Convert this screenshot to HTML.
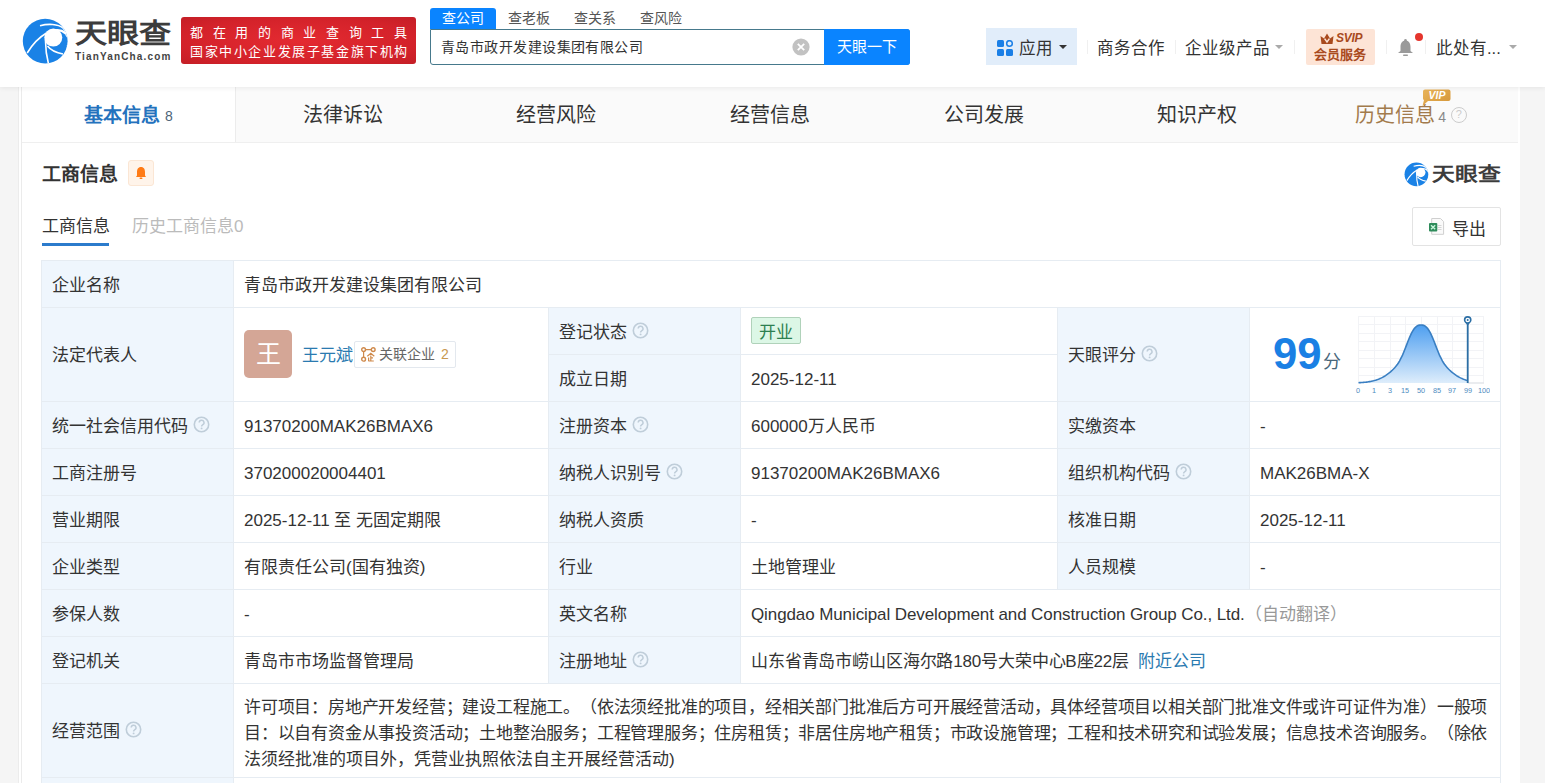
<!DOCTYPE html>
<html lang="zh-CN"><head><meta charset="utf-8">
<style>
*{box-sizing:border-box;margin:0;padding:0}
html,body{width:1545px;height:783px;overflow:hidden}
body{text-spacing-trim:space-all;background:#f5f5f5;font-family:"Liberation Sans",sans-serif;color:#333;position:relative}
.a{position:absolute;white-space:nowrap}
#hdr{position:absolute;left:0;top:0;width:1545px;height:87px;background:#fff;box-shadow:0 1px 5px rgba(0,0,0,.07);z-index:2}
#card{position:absolute;left:18px;top:87px;width:1502px;height:720px;background:#fff;border-left:1px solid #ececec}
#card:before{content:"";position:absolute;left:2px;top:0;width:1px;height:720px;background:#ebebeb}
#tabs{position:absolute;left:3px;top:0;width:1496px;height:56px;background:#fafafa;border-bottom:1px solid #efefef}
.tab{position:absolute;top:0;height:55px;width:213.7px;text-align:center;font-size:20px;line-height:57px;color:#333}
.tab.on{border-right:1px solid #ececec;background:#fff;color:#2472bd;font-weight:bold;font-size:19px}
#tbl{position:absolute;left:41px;top:260px;width:1460px;border-top:1px solid #e4ebf2;border-left:1px solid #e4ebf2}
.c{position:absolute;font-size:17px;line-height:46px;padding-left:10px;border-right:1px solid #e4ebf2;border-bottom:1px solid #e4ebf2;white-space:nowrap;color:#333}
.l{background:#eff6fd}
.qs{display:inline-block;vertical-align:middle;margin-left:5px;position:relative;top:-3px}
.q{display:inline-block;width:16px;height:16px;border:1.8px solid #bdd0e2;border-radius:50%;font-size:11px;line-height:13px;text-align:center;color:#b5cadf;vertical-align:middle;margin-left:7px;position:relative;top:-2px;font-weight:bold}
</style></head><body>
<div id="hdr">
  <!-- logo -->
  <svg class="a" style="left:18px;top:14px" width="54" height="54" viewBox="18 14 54 54">
    <defs><clipPath id="lc"><circle cx="45.2" cy="41.1" r="22.4"/></clipPath></defs>
    <circle cx="45.2" cy="41.1" r="22.4" fill="#1a82e6"/>
    <g clip-path="url(#lc)">
    <ellipse cx="57.5" cy="39" rx="12" ry="10" fill="#fff"/>
    <circle cx="57.5" cy="41.5" r="10.3" fill="#1a82e6"/>
    <circle cx="53.3" cy="37.6" r="9" fill="#fff"/>
    <path d="M40 25.8 C 48 23.5, 58 23.8, 63 28 C 65 30, 66 32, 66.5 34" stroke="#fff" stroke-width="1.6" fill="none"/>
    <path d="M27.2 53 C 32 45, 38 38, 46.5 33" stroke="#fff" stroke-width="1.6" fill="none"/>
    <path d="M45.6 39 C 45.3 47, 46.5 56, 48.5 64" stroke="#fff" stroke-width="1.6" fill="none"/>
    <path d="M47.5 46 C 51 50.5, 57 53, 63 54" stroke="#fff" stroke-width="1.6" fill="none"/>
    </g>
  </svg>
  <div class="a" style="left:75px;top:14px;font-size:27px;line-height:40px;font-weight:900;color:#3c3c3c;transform:scaleX(1.19);transform-origin:0 0">天眼查</div>
  <div class="a" style="left:75px;top:51px;font-size:10px;line-height:12px;font-weight:bold;color:#444;letter-spacing:1.15px">TianYanCha.com</div>
  <div class="a" style="left:181px;top:17px;width:235px;height:47px;background:radial-gradient(ellipse at 50% 50%,#e42a31,#d3222a 70%,#c41e26);border-radius:3px"></div>
  <div class="a" style="left:190px;top:23px;width:217px;font-size:13px;line-height:20px;font-weight:500;color:#fff;text-align:justify;text-align-last:justify;letter-spacing:0">都在用的商业查询工具</div>
  <div class="a" style="left:190px;top:42px;width:220px;font-size:13px;line-height:20px;color:#fff;letter-spacing:1.6px">国家中小企业发展子基金旗下机构</div>
  <!-- search -->
  <div class="a" style="left:430px;top:8px;width:66px;height:21px;background:#0a84ff;border-radius:3px 3px 0 0;color:#fff;font-size:14px;line-height:20px;text-align:center">查公司</div>
  <div class="a" style="left:496px;top:8px;width:66px;line-height:20px;font-size:14px;color:#555;text-align:center">查老板</div>
  <div class="a" style="left:562px;top:8px;width:66px;line-height:20px;font-size:14px;color:#555;text-align:center">查关系</div>
  <div class="a" style="left:628px;top:8px;width:66px;line-height:20px;font-size:14px;color:#555;text-align:center">查风险</div>
  <div class="a" style="left:430px;top:29px;width:480px;height:36px;border:1px solid #46798c;border-radius:0 3px 3px 3px;background:#fff"></div>
  <div class="a" style="left:441px;top:37px;font-size:14px;letter-spacing:0.45px;line-height:20px;color:#333">青岛市政开发建设集团有限公司</div>
  <svg class="a" style="left:792px;top:38px" width="18" height="18" viewBox="0 0 18 18"><circle cx="9" cy="9" r="8.6" fill="#c2c2c2"/><path d="M5.8 5.8 L12.2 12.2 M12.2 5.8 L5.8 12.2" stroke="#fff" stroke-width="1.8"/></svg>
  <div class="a" style="left:824px;top:29px;width:86px;height:36px;background:#0a84ff;border-radius:0 3px 3px 0;color:#fff;font-size:15px;line-height:36px;text-align:center">天眼一下</div>
  <!-- right nav -->
  <div class="a" style="left:986px;top:28px;width:91px;height:37px;background:#e1edfa"></div>
  <svg class="a" style="left:997px;top:40px" width="16" height="16" viewBox="0 0 16 16">
    <rect x="0" y="0" width="7" height="7" rx="1.5" fill="#1a7fe6"/>
    <circle cx="12.5" cy="3.5" r="2.8" fill="none" stroke="#1a7fe6" stroke-width="1.5"/>
    <rect x="0" y="9" width="7" height="7" rx="1.5" fill="#1a7fe6"/>
    <rect x="9" y="9" width="7" height="7" rx="1.5" fill="#1a7fe6"/>
  </svg>
  <div class="a" style="left:1019px;top:37px;font-size:16.5px;line-height:22px;color:#333">应用</div>
  <div class="a" style="left:1059px;top:45px;width:0;height:0;border-left:4px solid transparent;border-right:4px solid transparent;border-top:4px solid #333"></div>
  <div class="a" style="left:1087px;top:40px;width:1px;height:14px;background:#f0f0f0"></div>
  <div class="a" style="left:1097px;top:37px;font-size:16.5px;line-height:22px;color:#333">商务合作</div>
  <div class="a" style="left:1175px;top:40px;width:1px;height:14px;background:#f0f0f0"></div>
  <div class="a" style="left:1185px;top:37px;font-size:16.5px;line-height:22px;color:#333">企业级产品</div>
  <div class="a" style="left:1275px;top:45px;width:0;height:0;border-left:4px solid transparent;border-right:4px solid transparent;border-top:4px solid #aaa"></div>
  <div class="a" style="left:1294px;top:40px;width:1px;height:14px;background:#f0f0f0"></div>
  <div class="a" style="left:1306px;top:29px;width:69px;height:36px;background:#fde4d6;border-radius:2px"></div>
  <svg class="a" style="left:1320px;top:33px" width="14" height="12" viewBox="0 0 14 12">
    <path d="M0.5 3 L4 5.5 L7 0.5 L10 5.5 L13.5 3 L12.5 11 L1.5 11 Z" fill="#a94a1e"/>
    <path d="M4.6 5.6 L7 9 L9.4 5.6" stroke="#fde4d6" stroke-width="1.5" fill="none"/>
  </svg>
  <div class="a" style="left:1336px;top:31px;font-size:12px;line-height:14px;font-weight:bold;font-style:italic;color:#a94a1e;letter-spacing:-0.3px">SVIP</div>
  <div class="a" style="left:1314px;top:47px;font-size:13px;line-height:16px;font-weight:900;color:#a94a1e">会员服务</div>
  <div class="a" style="left:1386px;top:40px;width:1px;height:14px;background:#f0f0f0"></div>
  <svg class="a" style="left:1397px;top:38px" width="17" height="19" viewBox="0 0 17 19">
    <path d="M8.5 2.5 C 5 2.5, 3.5 5.5, 3.5 9 L 3.5 13 L 1 15 L 16 15 L 13.5 13 L 13.5 9 C 13.5 5.5, 12 2.5, 8.5 2.5 Z" fill="#9a9a9a"/><circle cx="8.5" cy="2.3" r="1.3" fill="#9a9a9a"/>
    <rect x="6" y="16.5" width="5" height="1.5" rx=".7" fill="#9a9a9a"/>
  </svg>
  <div class="a" style="left:1415px;top:33px;width:8px;height:8px;border-radius:50%;background:#e5352d"></div>
  <div class="a" style="left:1425px;top:40px;width:1px;height:14px;background:#f0f0f0"></div>
  <div class="a" style="left:1436px;top:37px;font-size:16.5px;line-height:22px;color:#333">此处有...</div>
  <div class="a" style="left:1509px;top:45px;width:0;height:0;border-left:4px solid transparent;border-right:4px solid transparent;border-top:4px solid #aaa"></div>
</div>

<div id="card">
  <div id="tabs">
    <div class="tab on" style="left:0">基本信息<span style="font-size:14px;font-weight:normal;color:#4d6478;margin-left:5px;position:relative;top:-1px">8</span></div>
    <div class="tab" style="left:213.7px">法律诉讼</div>
    <div class="tab" style="left:427.4px">经营风险</div>
    <div class="tab" style="left:641.1px">经营信息</div>
    <div class="tab" style="left:854.8px">公司发展</div>
    <div class="tab" style="left:1068.5px">知识产权</div>
    <div class="tab" style="left:1282.2px;color:#a27a4c">历史信息<span style="font-size:14px;color:#888;margin-left:3px">4</span><span class="q" style="border-color:#ccc;color:#ccc;width:16px;height:16px;margin-left:5px;border-width:1.3px;font-weight:normal">?</span></div>
  </div>
</div>

<div class="a" style="left:42px;top:162px;font-size:19px;line-height:26px;font-weight:bold;color:#333">工商信息</div>
<div class="a" style="left:128px;top:160px;width:26px;height:26px;background:#fff4ea;border:1px solid #fbe6d4;border-radius:3px"></div>
<svg class="a" style="left:134px;top:166px" width="14" height="14" viewBox="0 0 14 14">
  <path d="M7 1 C 4 1, 3 3.5, 3 6 L 3 9.5 L 2 11 L 12 11 L 11 9.5 L 11 6 C 11 3.5, 10 1, 7 1 Z" fill="#ff7b16"/>
  <rect x="5.5" y="11.5" width="3" height="1.5" rx=".7" fill="#ff7b16"/>
</svg>
<svg class="a" style="left:1402px;top:160px" width="28.6" height="28.6" viewBox="18 14 54 54">
    <defs><clipPath id="lc2"><circle cx="45.2" cy="41.1" r="22.4"/></clipPath></defs>
    <circle cx="45.2" cy="41.1" r="22.4" fill="#1a82e6"/>
    <g clip-path="url(#lc2)">
    <ellipse cx="57.5" cy="39" rx="12" ry="10" fill="#fff"/>
    <circle cx="57.5" cy="41.5" r="10.3" fill="#1a82e6"/>
    <circle cx="53.3" cy="37.6" r="9" fill="#fff"/>
    <path d="M40 25.8 C 48 23.5, 58 23.8, 63 28 C 65 30, 66 32, 66.5 34" stroke="#fff" stroke-width="2.2" fill="none"/>
    <path d="M27.2 53 C 32 45, 38 38, 46.5 33" stroke="#fff" stroke-width="2.2" fill="none"/>
    <path d="M45.6 39 C 45.3 47, 46.5 56, 48.5 64" stroke="#fff" stroke-width="2.2" fill="none"/>
    <path d="M47.5 46 C 51 50.5, 57 53, 63 54" stroke="#fff" stroke-width="2.2" fill="none"/>
    </g>
  </svg>
<div class="a" style="left:1432px;top:161px;font-size:19px;line-height:28px;font-weight:900;color:#3c3c3c;transform:scaleX(1.2);transform-origin:0 0">天眼查</div>

<div class="a" style="left:42px;top:215px;font-size:17px;line-height:24px;color:#333">工商信息</div>
<div class="a" style="left:132px;top:215px;font-size:17px;line-height:24px;color:#bbb">历史工商信息0</div>
<div class="a" style="left:42px;top:243px;width:67px;height:3px;background:#2b7bcc"></div>

<div class="a" style="left:1412px;top:207px;width:89px;height:39px;border:1px solid #e3e3e3;border-radius:2px;background:#fff"></div>
<svg class="a" style="left:1428px;top:217px" width="18" height="19" viewBox="0 0 18 19">
  <path d="M3.7 1.5 H12.5 L15.6 4.6 V17.3 H3.7 Z" fill="#fafafa" stroke="#cfcfcf" stroke-width="1"/>
  <line x1="10" y1="8.5" x2="13.5" y2="8.5" stroke="#d0d0d0" stroke-width="0.9"/><line x1="10" y1="10.5" x2="13.5" y2="10.5" stroke="#d0d0d0" stroke-width="0.9"/><line x1="10" y1="12.5" x2="13.5" y2="12.5" stroke="#d0d0d0" stroke-width="0.9"/>
  <rect x="1" y="6" width="8.3" height="8.5" rx="1" fill="#2e8b5a"/>
  <path d="M3 8.2 L7.2 12.3 M7.2 8.2 L3 12.3" stroke="#c8f5dc" stroke-width="1.4"/>
</svg>
<div class="a" style="left:1452px;top:218px;font-size:17px;line-height:24px;color:#333">导出</div>

<!-- table -->
<div class="a" style="left:41px;top:260px;width:192px;height:530px;background:#eff6fd"></div>
<div class="a" style="left:548px;top:307px;width:192px;height:376px;background:#eff6fd"></div>
<div class="a" style="left:1057px;top:307px;width:192px;height:282px;background:#eff6fd"></div>
<div class="a" style="left:41px;top:260px;width:1460px;height:1px;background:#e6ecf2"></div>
<div class="a" style="left:41px;top:307px;width:1460px;height:1px;background:#e6ecf2"></div>
<div class="a" style="left:41px;top:401px;width:1460px;height:1px;background:#e6ecf2"></div>
<div class="a" style="left:41px;top:448px;width:1460px;height:1px;background:#e6ecf2"></div>
<div class="a" style="left:41px;top:495px;width:1460px;height:1px;background:#e6ecf2"></div>
<div class="a" style="left:41px;top:542px;width:1460px;height:1px;background:#e6ecf2"></div>
<div class="a" style="left:41px;top:589px;width:1460px;height:1px;background:#e6ecf2"></div>
<div class="a" style="left:41px;top:636px;width:1460px;height:1px;background:#e6ecf2"></div>
<div class="a" style="left:41px;top:683px;width:1460px;height:1px;background:#e6ecf2"></div>
<div class="a" style="left:41px;top:777px;width:1460px;height:1px;background:#e6ecf2"></div>
<div class="a" style="left:548px;top:354px;width:510px;height:1px;background:#e6ecf2"></div>
<div class="a" style="left:41px;top:260px;width:1px;height:530px;background:#e6ecf2"></div>
<div class="a" style="left:233px;top:260px;width:1px;height:530px;background:#e6ecf2"></div>
<div class="a" style="left:1500px;top:260px;width:1px;height:530px;background:#e6ecf2"></div>
<div class="a" style="left:548px;top:307px;width:1px;height:376px;background:#e6ecf2"></div>
<div class="a" style="left:740px;top:307px;width:1px;height:376px;background:#e6ecf2"></div>
<div class="a" style="left:1057px;top:307px;width:1px;height:282px;background:#e6ecf2"></div>
<div class="a" style="left:1249px;top:307px;width:1px;height:282px;background:#e6ecf2"></div>
<div class="a" style="left:52px;top:262px;font-size:17px;line-height:47px;color:#333;">企业名称</div>
<div class="a" style="left:244px;top:262px;font-size:17px;line-height:47px;color:#333;">青岛市政开发建设集团有限公司</div>
<div class="a" style="left:559px;top:309px;font-size:17px;line-height:47px;color:#333;">登记状态<svg class="qs" width="17" height="17" viewBox="0 0 17 17"><circle cx="8.5" cy="8.5" r="7.2" fill="none" stroke="#bfcdd9" stroke-width="1.6"/><path d="M6.2 6.6 A2.4 2.4 0 1 1 9.6 8.8 C 8.9 9.2 8.6 9.6 8.6 10.4" fill="none" stroke="#bfcdd9" stroke-width="1.5"/><circle cx="8.6" cy="12.4" r="0.95" fill="#bfcdd9"/></svg></div>
<div class="a" style="left:559px;top:356px;font-size:17px;line-height:47px;color:#333;">成立日期</div>
<div class="a" style="left:751px;top:356px;font-size:17px;line-height:47px;color:#333;">2025-12-11</div>
<div class="a" style="left:52px;top:403px;font-size:17px;line-height:47px;color:#333;">统一社会信用代码<svg class="qs" width="17" height="17" viewBox="0 0 17 17"><circle cx="8.5" cy="8.5" r="7.2" fill="none" stroke="#bfcdd9" stroke-width="1.6"/><path d="M6.2 6.6 A2.4 2.4 0 1 1 9.6 8.8 C 8.9 9.2 8.6 9.6 8.6 10.4" fill="none" stroke="#bfcdd9" stroke-width="1.5"/><circle cx="8.6" cy="12.4" r="0.95" fill="#bfcdd9"/></svg></div>
<div class="a" style="left:244px;top:403px;font-size:17px;line-height:47px;color:#333;">91370200MAK26BMAX6</div>
<div class="a" style="left:559px;top:403px;font-size:17px;line-height:47px;color:#333;">注册资本<svg class="qs" width="17" height="17" viewBox="0 0 17 17"><circle cx="8.5" cy="8.5" r="7.2" fill="none" stroke="#bfcdd9" stroke-width="1.6"/><path d="M6.2 6.6 A2.4 2.4 0 1 1 9.6 8.8 C 8.9 9.2 8.6 9.6 8.6 10.4" fill="none" stroke="#bfcdd9" stroke-width="1.5"/><circle cx="8.6" cy="12.4" r="0.95" fill="#bfcdd9"/></svg></div>
<div class="a" style="left:751px;top:403px;font-size:17px;line-height:47px;color:#333;">600000万人民币</div>
<div class="a" style="left:1068px;top:403px;font-size:17px;line-height:47px;color:#333;">实缴资本</div>
<div class="a" style="left:1260px;top:403px;font-size:17px;line-height:47px;color:#333;">-</div>
<div class="a" style="left:52px;top:450px;font-size:17px;line-height:47px;color:#333;">工商注册号</div>
<div class="a" style="left:244px;top:450px;font-size:17px;line-height:47px;color:#333;">370200020004401</div>
<div class="a" style="left:559px;top:450px;font-size:17px;line-height:47px;color:#333;">纳税人识别号<svg class="qs" width="17" height="17" viewBox="0 0 17 17"><circle cx="8.5" cy="8.5" r="7.2" fill="none" stroke="#bfcdd9" stroke-width="1.6"/><path d="M6.2 6.6 A2.4 2.4 0 1 1 9.6 8.8 C 8.9 9.2 8.6 9.6 8.6 10.4" fill="none" stroke="#bfcdd9" stroke-width="1.5"/><circle cx="8.6" cy="12.4" r="0.95" fill="#bfcdd9"/></svg></div>
<div class="a" style="left:751px;top:450px;font-size:17px;line-height:47px;color:#333;">91370200MAK26BMAX6</div>
<div class="a" style="left:1068px;top:450px;font-size:17px;line-height:47px;color:#333;">组织机构代码<svg class="qs" width="17" height="17" viewBox="0 0 17 17"><circle cx="8.5" cy="8.5" r="7.2" fill="none" stroke="#bfcdd9" stroke-width="1.6"/><path d="M6.2 6.6 A2.4 2.4 0 1 1 9.6 8.8 C 8.9 9.2 8.6 9.6 8.6 10.4" fill="none" stroke="#bfcdd9" stroke-width="1.5"/><circle cx="8.6" cy="12.4" r="0.95" fill="#bfcdd9"/></svg></div>
<div class="a" style="left:1260px;top:450px;font-size:17px;line-height:47px;color:#333;">MAK26BMA-X</div>
<div class="a" style="left:52px;top:497px;font-size:17px;line-height:47px;color:#333;">营业期限</div>
<div class="a" style="left:244px;top:497px;font-size:17px;line-height:47px;color:#333;">2025-12-11 至 无固定期限</div>
<div class="a" style="left:559px;top:497px;font-size:17px;line-height:47px;color:#333;">纳税人资质</div>
<div class="a" style="left:751px;top:497px;font-size:17px;line-height:47px;color:#333;">-</div>
<div class="a" style="left:1068px;top:497px;font-size:17px;line-height:47px;color:#333;">核准日期</div>
<div class="a" style="left:1260px;top:497px;font-size:17px;line-height:47px;color:#333;">2025-12-11</div>
<div class="a" style="left:52px;top:544px;font-size:17px;line-height:47px;color:#333;">企业类型</div>
<div class="a" style="left:244px;top:544px;font-size:17px;line-height:47px;color:#333;">有限责任公司(国有独资)</div>
<div class="a" style="left:559px;top:544px;font-size:17px;line-height:47px;color:#333;">行业</div>
<div class="a" style="left:751px;top:544px;font-size:17px;line-height:47px;color:#333;">土地管理业</div>
<div class="a" style="left:1068px;top:544px;font-size:17px;line-height:47px;color:#333;">人员规模</div>
<div class="a" style="left:1260px;top:544px;font-size:17px;line-height:47px;color:#333;">-</div>
<div class="a" style="left:52px;top:591px;font-size:17px;line-height:47px;color:#333;">参保人数</div>
<div class="a" style="left:244px;top:591px;font-size:17px;line-height:47px;color:#333;">-</div>
<div class="a" style="left:559px;top:591px;font-size:17px;line-height:47px;color:#333;">英文名称</div>
<div class="a" style="left:751px;top:591px;font-size:17px;line-height:47px;color:#333;"><span style="letter-spacing:-0.1px">Qingdao Municipal Development and Construction Group Co., Ltd.</span><span style="color:#999">（自动翻译）</span></div>
<div class="a" style="left:52px;top:638px;font-size:17px;line-height:47px;color:#333;">登记机关</div>
<div class="a" style="left:244px;top:638px;font-size:17px;line-height:47px;color:#333;">青岛市市场监督管理局</div>
<div class="a" style="left:559px;top:638px;font-size:17px;line-height:47px;color:#333;">注册地址<svg class="qs" width="17" height="17" viewBox="0 0 17 17"><circle cx="8.5" cy="8.5" r="7.2" fill="none" stroke="#bfcdd9" stroke-width="1.6"/><path d="M6.2 6.6 A2.4 2.4 0 1 1 9.6 8.8 C 8.9 9.2 8.6 9.6 8.6 10.4" fill="none" stroke="#bfcdd9" stroke-width="1.5"/><circle cx="8.6" cy="12.4" r="0.95" fill="#bfcdd9"/></svg></div>
<div class="a" style="left:751px;top:638px;font-size:17px;line-height:47px;color:#333;"><span style="letter-spacing:-0.15px">山东省青岛市崂山区海尔路180号大荣中心B座22层</span><span style="color:#2a7ab0;margin-left:9px">附近公司</span></div>
<div class="a" style="left:52px;top:309px;font-size:17px;line-height:47px;color:#333;line-height:94px">法定代表人</div>
<div class="a" style="left:1068px;top:309px;font-size:17px;line-height:47px;color:#333;line-height:94px">天眼评分<svg class="qs" width="17" height="17" viewBox="0 0 17 17"><circle cx="8.5" cy="8.5" r="7.2" fill="none" stroke="#bfcdd9" stroke-width="1.6"/><path d="M6.2 6.6 A2.4 2.4 0 1 1 9.6 8.8 C 8.9 9.2 8.6 9.6 8.6 10.4" fill="none" stroke="#bfcdd9" stroke-width="1.5"/><circle cx="8.6" cy="12.4" r="0.95" fill="#bfcdd9"/></svg></div>
<div class="a" style="left:52px;top:685px;font-size:17px;line-height:47px;color:#333;line-height:94px">经营范围<svg class="qs" width="17" height="17" viewBox="0 0 17 17"><circle cx="8.5" cy="8.5" r="7.2" fill="none" stroke="#bfcdd9" stroke-width="1.6"/><path d="M6.2 6.6 A2.4 2.4 0 1 1 9.6 8.8 C 8.9 9.2 8.6 9.6 8.6 10.4" fill="none" stroke="#bfcdd9" stroke-width="1.5"/><circle cx="8.6" cy="12.4" r="0.95" fill="#bfcdd9"/></svg></div>
<!-- vip badge -->
<svg class="a" style="left:1420px;top:88px" width="32" height="19" viewBox="0 0 32 19">
  <defs><linearGradient id="vg" x1="0" y1="0" x2="1" y2="1"><stop offset="0" stop-color="#e9b45a"/><stop offset="1" stop-color="#d39436"/></linearGradient></defs>
  <path d="M5 1.5 H28.5 Q30.5 1.5 30.5 3.5 V11 Q30.5 13 28.5 13 H8 L2.5 18 L4 12 Q3 11.5 3 10.5 V3.5 Q3 1.5 5 1.5 Z" fill="url(#vg)"/>
  <text x="17" y="11.3" font-family="Liberation Sans" font-size="10.5" font-weight="bold" font-style="italic" fill="#fff" text-anchor="middle">VIP</text>
</svg>
<!-- legal rep -->
<div class="a" style="left:244px;top:330px;width:48px;height:48px;background:#d4a696;border-radius:5px;color:#fff;font-size:25px;line-height:48px;text-align:center">王</div>
<div class="a" style="left:302px;top:344px;font-size:17px;line-height:24px;color:#2a7ab0">王元斌</div>
<div class="a" style="left:354px;top:341px;width:102px;height:27px;border:1px solid #e3e8ee;border-radius:2px;background:#fff"></div>
<svg class="a" style="left:361px;top:347px" width="16" height="15" viewBox="0 0 16 15">
  <circle cx="2.6" cy="2.6" r="1.9" fill="none" stroke="#cf8a4c" stroke-width="1.4"/>
  <circle cx="12.2" cy="2.6" r="1.9" fill="none" stroke="#cf8a4c" stroke-width="1.4"/>
  <circle cx="2.6" cy="12.2" r="1.9" fill="none" stroke="#cf8a4c" stroke-width="1.4"/>
  <path d="M4.5 2.6 H10.3 M2.6 4.5 V10.3" stroke="#cf8a4c" stroke-width="1.2"/>
  <path d="M6.3 9.2 L9.8 6.2 L13.3 9.2 M7.3 14 H12.8 M9.8 8.5 V14 M9.8 10.8 H12 M7.6 10.5 V14" fill="none" stroke="#cf8a4c" stroke-width="1.2"/>
</svg>
<div class="a" style="left:379px;top:344px;font-size:14px;line-height:20px;color:#666">关联企业</div>
<div class="a" style="left:441px;top:344px;font-size:14px;line-height:20px;color:#c99850">2</div>
<!-- status -->
<div class="a" style="left:751px;top:317px;width:50px;height:27px;background:#dcf7e6;border:1px solid #b0d2ba;border-radius:2px;color:#2d8050;font-size:17px;line-height:29px;text-align:center;overflow:hidden">开业</div>
<!-- score -->
<div class="a" style="left:1273px;top:329px;font-size:45px;line-height:50px;font-weight:bold;color:#1a80e4;transform:scaleX(0.97);transform-origin:0 0">99</div>
<div class="a" style="left:1323px;top:352px;font-size:18px;line-height:20px;color:#48667a">分</div>
<svg class="a" style="left:1350px;top:312px" width="140" height="86" viewBox="0 0 140 86">
  <defs>
    <linearGradient id="g1" x1="0" y1="0" x2="0" y2="1">
      <stop offset="0" stop-color="#4e9ff0"/>
      <stop offset="1" stop-color="#deedfb"/>
    </linearGradient>
  </defs>
  <g stroke="#f2f3f6" stroke-width="1"><line x1="8" y1="4.5" x2="134" y2="4.5"/><line x1="8" y1="12.5" x2="134" y2="12.5"/><line x1="8" y1="21.5" x2="134" y2="21.5"/><line x1="8" y1="29.5" x2="134" y2="29.5"/><line x1="8" y1="38.5" x2="134" y2="38.5"/><line x1="8" y1="46.5" x2="134" y2="46.5"/><line x1="8" y1="55.5" x2="134" y2="55.5"/><line x1="8" y1="63.5" x2="134" y2="63.5"/><line x1="8.5" y1="4" x2="8.5" y2="71"/><line x1="24.5" y1="4" x2="24.5" y2="71"/><line x1="40.5" y1="4" x2="40.5" y2="71"/><line x1="55.5" y1="4" x2="55.5" y2="71"/><line x1="71.5" y1="4" x2="71.5" y2="71"/><line x1="87.5" y1="4" x2="87.5" y2="71"/><line x1="102.5" y1="4" x2="102.5" y2="71"/><line x1="118.5" y1="4" x2="118.5" y2="71"/><line x1="133.5" y1="4" x2="133.5" y2="71"/></g>
  <path d="M8.5 70.71 L9.5 70.66 L10.5 70.61 L11.5 70.55 L12.5 70.47 L13.5 70.39 L14.5 70.30 L15.5 70.20 L16.5 70.09 L17.5 69.96 L18.5 69.81 L19.5 69.65 L20.5 69.47 L21.5 69.27 L22.5 69.05 L23.5 68.81 L24.5 68.54 L25.5 68.25 L26.5 67.92 L27.5 67.57 L28.5 67.19 L29.5 66.78 L30.5 66.33 L31.5 65.85 L32.5 65.34 L33.5 64.79 L34.5 64.20 L35.5 63.57 L36.5 62.90 L37.5 62.20 L38.5 61.45 L39.5 60.66 L40.5 59.83 L41.5 58.95 L42.5 58.02 L43.5 57.03 L44.5 55.97 L45.5 54.83 L46.5 53.58 L47.5 52.21 L48.5 50.70 L49.5 49.04 L50.5 47.22 L51.5 45.22 L52.5 43.05 L53.5 40.72 L54.5 38.27 L55.5 35.72 L56.5 33.12 L57.5 30.53 L58.5 27.99 L59.5 25.56 L60.5 23.28 L61.5 21.20 L62.5 19.34 L63.5 17.73 L64.5 16.38 L65.5 15.28 L66.5 14.42 L67.5 13.79 L68.5 13.37 L69.5 13.12 L70.5 13.01 L71.5 13.01 L72.5 13.12 L73.5 13.37 L74.5 13.79 L75.5 14.42 L76.5 15.28 L77.5 16.38 L78.5 17.73 L79.5 19.34 L80.5 21.20 L81.5 23.28 L82.5 25.56 L83.5 27.99 L84.5 30.53 L85.5 33.12 L86.5 35.72 L87.5 38.27 L88.5 40.72 L89.5 43.05 L90.5 45.22 L91.5 47.22 L92.5 49.04 L93.5 50.70 L94.5 52.21 L95.5 53.58 L96.5 54.83 L97.5 55.97 L98.5 57.03 L99.5 58.02 L100.5 58.95 L101.5 59.83 L102.5 60.66 L103.5 61.45 L104.5 62.20 L105.5 62.90 L106.5 63.57 L107.5 64.20 L108.5 64.79 L109.5 65.34 L110.5 65.85 L111.5 66.33 L112.5 66.78 L113.5 67.19 L114.5 67.57 L115.5 67.92 L116.5 68.25 L117.5 68.54 L117.7 68.59 L117.6 71 L8 71 Z" fill="url(#g1)"/>
  <line x1="117.6" y1="71" x2="134" y2="71" stroke="#e3e6ea" stroke-width="1.5"/>
  <path d="M8.5 70.71 L9.5 70.66 L10.5 70.61 L11.5 70.55 L12.5 70.47 L13.5 70.39 L14.5 70.30 L15.5 70.20 L16.5 70.09 L17.5 69.96 L18.5 69.81 L19.5 69.65 L20.5 69.47 L21.5 69.27 L22.5 69.05 L23.5 68.81 L24.5 68.54 L25.5 68.25 L26.5 67.92 L27.5 67.57 L28.5 67.19 L29.5 66.78 L30.5 66.33 L31.5 65.85 L32.5 65.34 L33.5 64.79 L34.5 64.20 L35.5 63.57 L36.5 62.90 L37.5 62.20 L38.5 61.45 L39.5 60.66 L40.5 59.83 L41.5 58.95 L42.5 58.02 L43.5 57.03 L44.5 55.97 L45.5 54.83 L46.5 53.58 L47.5 52.21 L48.5 50.70 L49.5 49.04 L50.5 47.22 L51.5 45.22 L52.5 43.05 L53.5 40.72 L54.5 38.27 L55.5 35.72 L56.5 33.12 L57.5 30.53 L58.5 27.99 L59.5 25.56 L60.5 23.28 L61.5 21.20 L62.5 19.34 L63.5 17.73 L64.5 16.38 L65.5 15.28 L66.5 14.42 L67.5 13.79 L68.5 13.37 L69.5 13.12 L70.5 13.01 L71.5 13.01 L72.5 13.12 L73.5 13.37 L74.5 13.79 L75.5 14.42 L76.5 15.28 L77.5 16.38 L78.5 17.73 L79.5 19.34 L80.5 21.20 L81.5 23.28 L82.5 25.56 L83.5 27.99 L84.5 30.53 L85.5 33.12 L86.5 35.72 L87.5 38.27 L88.5 40.72 L89.5 43.05 L90.5 45.22 L91.5 47.22 L92.5 49.04 L93.5 50.70 L94.5 52.21 L95.5 53.58 L96.5 54.83 L97.5 55.97 L98.5 57.03 L99.5 58.02 L100.5 58.95 L101.5 59.83 L102.5 60.66 L103.5 61.45 L104.5 62.20 L105.5 62.90 L106.5 63.57 L107.5 64.20 L108.5 64.79 L109.5 65.34 L110.5 65.85 L111.5 66.33 L112.5 66.78 L113.5 67.19 L114.5 67.57 L115.5 67.92 L116.5 68.25 L117.5 68.54 L117.7 68.59" fill="none" stroke="#3a7fc2" stroke-width="1.6"/>
  <line x1="117.7" y1="9" x2="117.7" y2="71" stroke="#2c6fa5" stroke-width="1.8"/>
  <path d="M117.7 13.5 C 115.5 11, 113.8 9.8, 113.8 8 A 3.9 3.9 0 1 1 121.6 8 C 121.6 9.8, 120 11, 117.7 13.5 Z" fill="#2c6fa5"/>
  <circle cx="117.7" cy="8" r="2.3" fill="#fff"/><circle cx="117.7" cy="8" r="1" fill="#2c6fa5"/>
  <g font-family="Liberation Sans" font-size="7.3" fill="#4f8cc0" text-anchor="middle">
    <text x="8" y="81">0</text><text x="24" y="81">1</text><text x="40" y="81">3</text><text x="55" y="81">15</text>
    <text x="71" y="81">50</text><text x="87" y="81">85</text><text x="102" y="81">97</text><text x="118" y="81">99</text><text x="134" y="81">100</text>
  </g>
</svg>
<!-- scope -->
<div class="a" style="left:244px;top:694px;font-size:17px;line-height:27px;color:#333;letter-spacing:-0.2px">许可项目：房地产开发经营；建设工程施工。（依法须经批准的项目，经相关部门批准后方可开展经营活动，具体经营项目以相关部门批准文件或许可证件为准）一般项</div>
<div class="a" style="left:244px;top:720px;font-size:17px;line-height:27px;color:#333;letter-spacing:-0.2px">目：以自有资金从事投资活动；土地整治服务；工程管理服务；住房租赁；非居住房地产租赁；市政设施管理；工程和技术研究和试验发展；信息技术咨询服务。（除依</div>
<div class="a" style="left:244px;top:746px;font-size:17px;line-height:27px;color:#333">法须经批准的项目外，凭营业执照依法自主开展经营活动)</div>

</body></html>
